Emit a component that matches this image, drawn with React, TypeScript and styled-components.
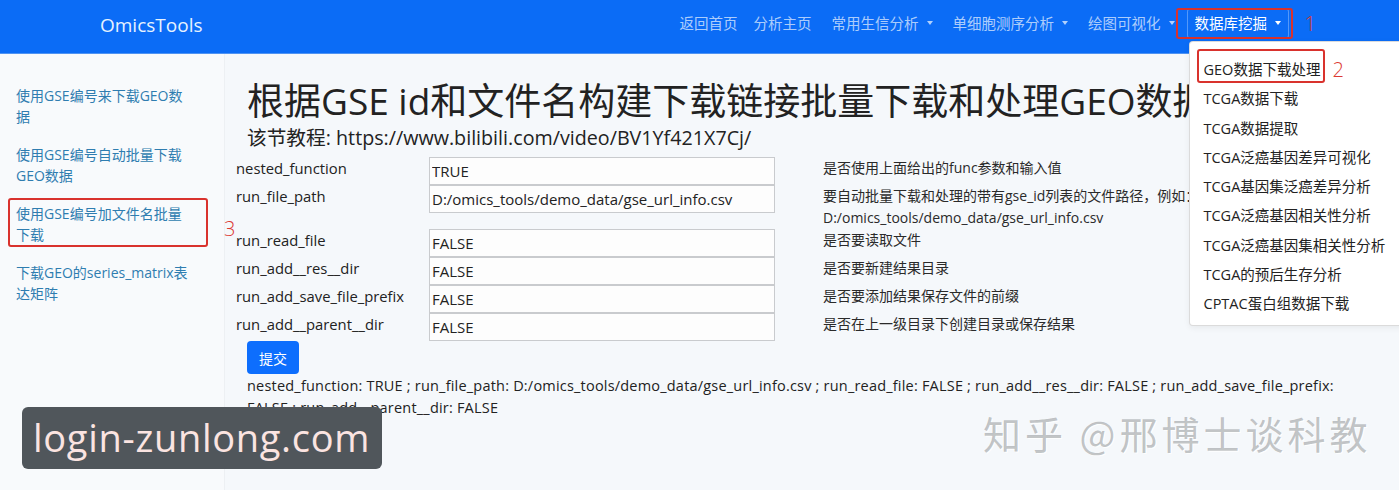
import React from 'react';
import styled, { createGlobalStyle } from 'styled-components';

const GlobalStyle = createGlobalStyle`
  html, body {
    margin: 0;
    padding: 0;
    overflow: hidden;
    background: #f5f8fb;
  }
  body {
    font-family: "Open Sans", "Noto Sans CJK SC", sans-serif;
    color: #222;
  }
  * {
    box-sizing: border-box;
  }
`;

const Page = styled.div`
  position: relative;
  width: 1399px;
  height: 490px;
  overflow: hidden;
  background: #f5f8fb;
`;

const NavBar = styled.nav`
  position: relative;
  z-index: 5;
  display: flex;
  align-items: flex-start;
  height: 54px;
  padding: 0 110px 0 100px;
  background: #0b6cf6;
  border-bottom: 1px solid #4f93f2;
`;

const Brand = styled.div`
  margin-top: 12px;
  font-size: 19px;
  line-height: 26px;
  color: #e6f2ff;
`;

const NavList = styled.ul`
  display: flex;
  margin: 8px 0 0 auto;
  padding: 0;
  list-style: none;
`;

const NavItem = styled.li<{ $active?: boolean; $toggle?: boolean }>`
  position: relative;
  display: flex;
  align-items: center;
  height: 31px;
  padding: 0 8px 3px;
  margin-left: ${(p) => (p.$toggle ? '4px' : '0')};
  font-family: "Noto Sans CJK SC", sans-serif;
  font-size: 14.5px;
  white-space: nowrap;
  color: ${(p) => (p.$active ? '#ffffff' : 'rgba(255, 255, 255, 0.68)')};
  border-radius: 4px;
  box-shadow: ${(p) => (p.$active ? 'inset 0 0 0 1px rgba(255, 255, 255, 0.3)' : 'none')};
`;

const Caret = styled.span`
  display: inline-block;
  margin-left: 8px;
  margin-top: 2px;
  border-top: 4px solid currentColor;
  border-left: 3.5px solid transparent;
  border-right: 3.5px solid transparent;
`;

const Dropdown = styled.ul`
  position: absolute;
  top: 33px;
  left: 2px;
  z-index: 10;
  width: 225px;
  margin: 0;
  padding: 13px 0 7px;
  list-style: none;
  background: #fff;
  border: 1px solid rgba(0, 0, 0, 0.14);
  border-radius: 4px;
  box-shadow: 0 2px 6px rgba(0, 0, 0, 0.06);
`;

const DropItem = styled.li`
  position: relative;
  padding: 0 14px;
  font-family: "Open Sans", "Noto Sans CJK SC", sans-serif;
  font-size: 14.5px;
  line-height: 29.25px;
  color: #222;
  white-space: nowrap;
`;

// red hand-drawn annotation box laid over an element
const Mark = styled.span<{ $l: number; $t: number; $w: number; $h: number }>`
  position: absolute;
  left: ${(p) => p.$l}px;
  top: ${(p) => p.$t}px;
  width: ${(p) => p.$w}px;
  height: ${(p) => p.$h}px;
  border: 2px solid #d9322d;
  border-radius: 3px;
  pointer-events: none;
`;

const MarkNum = styled.span<{ $l: number; $t: number }>`
  position: absolute;
  left: ${(p) => p.$l}px;
  top: ${(p) => p.$t}px;
  font-family: "Open Sans", sans-serif;
  font-size: 20px;
  font-weight: 300;
  line-height: 20px;
  color: #dc3a33;
`;

const Layout = styled.div`
  display: flex;
  height: 436px;
`;

const Sidebar = styled.aside`
  flex: none;
  width: 225px;
  padding: 26px 0 0 8px;
  background: #f8fafc;
  border-right: 1px solid #edf0f3;
`;

const SideItem = styled.div`
  position: relative;
  width: 200px;
  margin-bottom: 10px;
  padding: 3px 6px 0;
  border: 2px solid transparent;
  font-size: 14px;
  line-height: 21px;
  color: #2f7db0;
  white-space: nowrap;
`;

const Main = styled.main`
  flex: 1;
  min-width: 0;
  padding: 25px 0 0 22px;
`;

const Title = styled.h1`
  margin: 0;
  font-size: 37px;
  font-weight: 400;
  line-height: 44px;
  white-space: nowrap;
  color: #222;
`;

const Subtitle = styled.div`
  margin: 2px 0 6px;
  font-size: 19.7px;
  line-height: 26px;
  color: #222;
`;

const FormGrid = styled.div`
  display: grid;
  grid-template-columns: 193px 346px 1fr;
  margin-left: -11px;
`;

const Label = styled.div`
  font-size: 14.8px;
  line-height: 22px;
  color: #222;
`;

const Field = styled.input`
  align-self: start;
  width: 346px;
  height: 28px;
  margin: 0;
  padding: 0 2px;
  font: inherit;
  font-size: 15px;
  color: #222;
  background: #fdfdfd;
  border: 1px solid #c9cbce;
  border-radius: 0;
  outline: none;
`;

const Desc = styled.div`
  padding-left: 48px;
  font-size: 14px;
  line-height: 22px;
  color: #2a2a2a;
`;

const SubmitButton = styled.button`
  height: 33px;
  margin: 0;
  padding: 0 12px;
  font-family: "Noto Sans CJK SC", sans-serif;
  font-size: 14px;
  color: #fff;
  background: #0d6efd;
  border: none;
  border-radius: 4px;
`;

const Result = styled.div`
  max-width: 1110px;
  margin-top: 1px;
  font-size: 14.5px;
  line-height: 22px;
  letter-spacing: 0.2px;
  color: #222;
`;

const SiteStamp = styled.div`
  position: absolute;
  left: 22px;
  top: 407px;
  width: 360px;
  height: 62px;
  padding-left: 11px;
  font-size: 38px;
  line-height: 60px;
  letter-spacing: 0.7px;
  color: #fbe4e1;
  background: #50565b;
  border-radius: 6px;
`;

const ZhihuStamp = styled.div`
  position: absolute;
  left: 983px;
  top: 408px;
  font-family: "Noto Sans CJK SC", sans-serif;
  font-size: 38px;
  line-height: 50px;
  letter-spacing: 4px;
  color: rgba(110, 114, 118, 0.42);
  text-shadow: 1px 1px 0 rgba(255, 255, 255, 0.9);
  white-space: nowrap;
`;

const navLinks = [
  { label: '返回首页' },
  { label: '分析主页' },
  { label: '常用生信分析', toggle: true },
  { label: '单细胞测序分析', toggle: true },
  { label: '绘图可视化', toggle: true },
];

const dbItems = [
  'GEO数据下载处理',
  'TCGA数据下载',
  'TCGA数据提取',
  'TCGA泛癌基因差异可视化',
  'TCGA基因集泛癌差异分析',
  'TCGA泛癌基因相关性分析',
  'TCGA泛癌基因集相关性分析',
  'TCGA的预后生存分析',
  'CPTAC蛋白组数据下载',
];

const sideLinks = [
  ['使用GSE编号来下载GEO数', '据'],
  ['使用GSE编号自动批量下载', 'GEO数据'],
  ['使用GSE编号加文件名批量', '下载'],
  ['下载GEO的series_matrix表', '达矩阵'],
];

const params = [
  { name: 'nested_function', value: 'TRUE', desc: '是否使用上面给出的func参数和输入值' },
  {
    name: 'run_file_path',
    value: 'D:/omics_tools/demo_data/gse_url_info.csv',
    desc: '要自动批量下载和处理的带有gse_id列表的文件路径，例如： D:/omics_tools/demo_data/gse_url_info.csv',
  },
  { name: 'run_read_file', value: 'FALSE', desc: '是否要读取文件' },
  { name: 'run_add__res__dir', value: 'FALSE', desc: '是否要新建结果目录' },
  { name: 'run_add_save_file_prefix', value: 'FALSE', desc: '是否要添加结果保存文件的前缀' },
  { name: 'run_add__parent__dir', value: 'FALSE', desc: '是否在上一级目录下创建目录或保存结果' },
];

const App: React.FC = () => {
  const summary = params.map((p) => `${p.name}: ${p.value}`).join(' ; ');

  return (
    <Page>
      <GlobalStyle />
      <NavBar>
        <Brand>OmicsTools</Brand>
        <NavList>
          {navLinks.map((link) => (
            <NavItem key={link.label} $toggle={link.toggle}>
              {link.label}
              {link.toggle && <Caret />}
            </NavItem>
          ))}
          <NavItem $toggle $active>
            数据库挖掘
            <Caret />
            <Mark $l={-11} $t={0} $w={117} $h={31} />
            <MarkNum $l={118} $t={6}>1</MarkNum>
            <Dropdown>
              {dbItems.map((item, i) => (
                <DropItem key={item}>
                  {item}
                  {i === 0 && (
                    <>
                      <Mark $l={7} $t={-6} $w={128} $h={34} />
                      <MarkNum $l={143} $t={5}>2</MarkNum>
                    </>
                  )}
                </DropItem>
              ))}
            </Dropdown>
          </NavItem>
        </NavList>
      </NavBar>

      <Layout>
        <Sidebar>
          {sideLinks.map((lines, i) => (
            <SideItem key={i}>
              {lines[0]}
              <br />
              {lines[1]}
              {i === 2 && (
                <>
                  <Mark $l={-2} $t={-2} $w={200} $h={49} />
                  <MarkNum $l={214} $t={19}>3</MarkNum>
                </>
              )}
            </SideItem>
          ))}
        </Sidebar>

        <Main>
          <Title>根据GSE id和文件名构建下载链接批量下载和处理GEO数据</Title>
          <Subtitle>该节教程: https://www.bilibili.com/video/BV1Yf421X7Cj/</Subtitle>
          <FormGrid>
            {params.map((p) => (
              <React.Fragment key={p.name}>
                <Label>{p.name}</Label>
                <Field readOnly value={p.value} />
                <Desc>{p.desc}</Desc>
              </React.Fragment>
            ))}
          </FormGrid>
          <SubmitButton>提交</SubmitButton>
          <Result>{summary}</Result>
        </Main>
      </Layout>

      <SiteStamp>login-zunlong.com</SiteStamp>
      <ZhihuStamp>知乎 @邢博士谈科教</ZhihuStamp>
    </Page>
  );
};

export default App;
